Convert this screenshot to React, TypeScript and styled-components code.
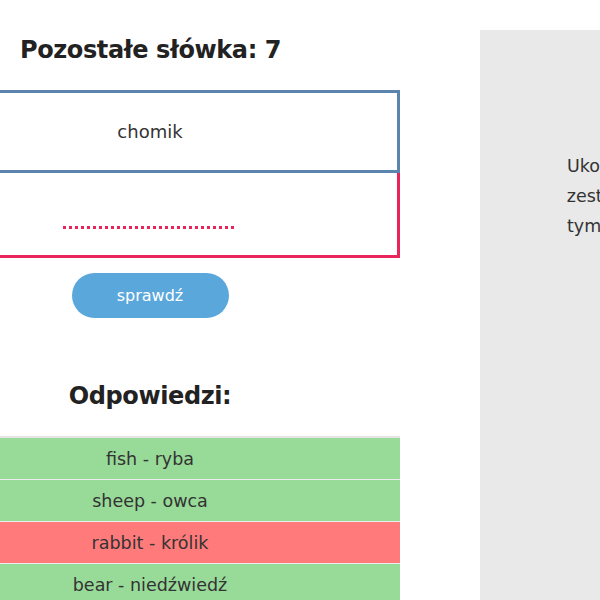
import React from "react";
import styled, { createGlobalStyle } from "styled-components";

const FONT = `"DejaVu Sans", "Noto Sans", sans-serif`;

const GlobalStyle = createGlobalStyle`
  html, body {
    margin: 0;
    padding: 0;
    overflow: hidden;
    background: #ffffff;
    font-family: ${FONT};
    color: #2b2b2b;
  }
`;

const Page = styled.div`
  display: flex;
  align-items: flex-start;
  width: 1000px;
  height: 600px;
`;

const LeftColumn = styled.section`
  flex-shrink: 0;
  width: 500px;
  margin-left: -100px;
  display: flex;
  flex-direction: column;
  align-items: stretch;
`;

const Title = styled.h2`
  margin: 0;
  padding: 34px 0 0 120px;
  font-size: 24px;
  line-height: 32px;
  font-weight: 700;
  color: #222;
  letter-spacing: -0.4px;
`;

const WordBox = styled.div`
  box-sizing: border-box;
  margin-top: 24px;
  height: 83px;
  border: 3px solid #5b85ad;
  display: flex;
  align-items: center;
  justify-content: center;
  font-size: 18px;
  color: #333;
`;

const AnswerBox = styled.div`
  box-sizing: border-box;
  height: 85px;
  border: 3px solid #e8245a;
  border-top: none;
  display: flex;
  align-items: flex-end;
  justify-content: center;
  padding-bottom: 26px;
`;

const AnswerInput = styled.input`
  box-sizing: border-box;
  width: 174px;
  height: 26px;
  border: none;
  outline: none;
  padding: 0 0 3px;
  text-align: center;
  font-family: ${FONT};
  font-size: 17px;
  color: #333;
  background-color: transparent;
  background-image: linear-gradient(to right, #e8245a 50%, transparent 50%);
  background-size: 6px 3px;
  background-repeat: repeat-x;
  background-position: left bottom;
`;

const CheckButton = styled.button`
  align-self: center;
  margin-top: 15px;
  width: 157px;
  height: 45px;
  border: none;
  border-radius: 23px;
  background: #5aa7dc;
  color: #ffffff;
  font-family: ${FONT};
  font-size: 16px;
  cursor: pointer;
`;

const SubTitle = styled.h3`
  margin: 62px 0 0;
  text-align: center;
  font-size: 24px;
  line-height: 32px;
  font-weight: 700;
  color: #222;
  letter-spacing: -0.4px;
`;

const AnswerList = styled.ul`
  list-style: none;
  margin: 24px 0 0;
  padding: 0;
  border-top: 2px solid #e4e4e4;
`;

const AnswerRow = styled.li<{ $correct: boolean }>`
  box-sizing: border-box;
  height: 42px;
  display: flex;
  align-items: center;
  justify-content: center;
  background: ${(p) => (p.$correct ? "#98da98" : "#ff7b7b")};
  border-bottom: 1.5px solid #ececec;
  font-size: 17.5px;
  color: #333;
`;

const InfoPanel = styled.aside`
  flex-shrink: 0;
  box-sizing: border-box;
  width: 300px;
  height: 570px;
  margin-top: 30px;
  margin-left: 80px;
  background: #e9e9e9;
  padding-top: 121px;
  display: flex;
  flex-direction: column;
  align-items: center;
  font-size: 17.5px;
  line-height: 30px;
  color: #333;
`;

const InfoLine = styled.span`
  display: block;
  white-space: nowrap;
`;

const answers = [
  { text: "fish - ryba", correct: true },
  { text: "sheep - owca", correct: true },
  { text: "rabbit - królik", correct: false },
  { text: "bear - niedźwiedź", correct: true },
];

export default function App() {
  return (
    <>
      <GlobalStyle />
      <Page>
        <LeftColumn>
          <Title>Pozostałe słówka: 7</Title>
          <WordBox>chomik</WordBox>
          <AnswerBox>
            <AnswerInput type="text" aria-label="tłumaczenie" />
          </AnswerBox>
          <CheckButton>sprawdź</CheckButton>
          <SubTitle>Odpowiedzi:</SubTitle>
          <AnswerList>
            {answers.map((a) => (
              <AnswerRow key={a.text} $correct={a.correct}>
                {a.text}
              </AnswerRow>
            ))}
          </AnswerList>
        </LeftColumn>
        <InfoPanel>
          <InfoLine>Ukończono już</InfoLine>
          <InfoLine>zestaw słówek</InfoLine>
          <InfoLine>tym poziomie!</InfoLine>
        </InfoPanel>
      </Page>
    </>
  );
}
